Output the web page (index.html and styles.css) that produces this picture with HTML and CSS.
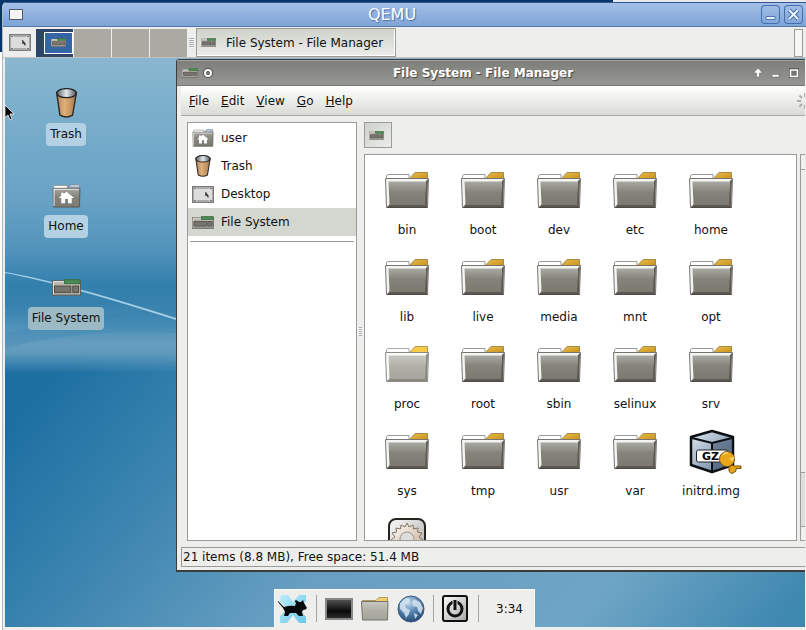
FILE: index.html
```html
<!DOCTYPE html>
<html lang="en">
<head>
<meta charset="utf-8">
<title>QEMU</title>
<link rel="stylesheet" href="styles.css">
</head>
<body>
<svg class="defs" aria-hidden="true">
  <defs>
    <linearGradient id="g-front" x1="0" y1="0" x2="0" y2="1"><stop offset="0" stop-color="#a9a9a3"/><stop offset=".45" stop-color="#85847b"/><stop offset="1" stop-color="#7b7970"/></linearGradient>
    <linearGradient id="g-pale" x1="0" y1="0" x2="0" y2="1"><stop offset="0" stop-color="#c8c8c2"/><stop offset=".5" stop-color="#b0afa5"/><stop offset="1" stop-color="#a6a59b"/></linearGradient>
    <linearGradient id="g-gold" x1="0" y1="0" x2="1" y2="1"><stop offset="0" stop-color="#e9be4e"/><stop offset="1" stop-color="#c8911a"/></linearGradient>
    <linearGradient id="g-wood" x1="0" y1="0" x2="1" y2="0"><stop offset="0" stop-color="#a8845c"/><stop offset=".4" stop-color="#e0b07a"/><stop offset="1" stop-color="#a9794c"/></linearGradient>
    <linearGradient id="g-steel" x1="0" y1="0" x2="1" y2="0"><stop offset="0" stop-color="#555f66"/><stop offset=".5" stop-color="#e4e8ea"/><stop offset="1" stop-color="#4d565c"/></linearGradient>
    <linearGradient id="g-gray" x1="0" y1="0" x2="1" y2="1"><stop offset="0" stop-color="#fafafa"/><stop offset="1" stop-color="#a9a9a9"/></linearGradient>
    <linearGradient id="g-cube" x1="0" y1="0" x2="1" y2="1"><stop offset="0" stop-color="#dfe9f2"/><stop offset="1" stop-color="#5c7796"/></linearGradient>
    <linearGradient id="g-gear" x1="0" y1="0" x2="1" y2="1"><stop offset="0" stop-color="#fff"/><stop offset="1" stop-color="#c9ad94"/></linearGradient>
    <linearGradient id="g-screen" x1="0" y1="0" x2="0" y2="1"><stop offset="0" stop-color="#565656"/><stop offset=".6" stop-color="#0a0a0a"/><stop offset="1" stop-color="#303030"/></linearGradient>
    <radialGradient id="g-globe" cx=".4" cy=".25" r=".8"><stop offset="0" stop-color="#c3d9ec"/><stop offset=".5" stop-color="#5583b0"/><stop offset="1" stop-color="#1f4570"/></radialGradient>
    <linearGradient id="g-x" x1="0" y1="0" x2="1" y2="1"><stop offset="0" stop-color="#b9ecfb"/><stop offset="1" stop-color="#6cc7e6"/></linearGradient>
  </defs>
  <symbol id="folder" viewBox="0 0 46 37">
    <path d="M2.500 8V3.500L4 2.500H25V8z" fill="#fff" stroke="#999"/>
    <path d="M25 7L31 .500H43.500V7z" fill="url(#g-gold)" stroke="#a58a4c"/>
    <path d="M1.500 6.500H44.500L43.500 35.500H2.500z" fill="#f4f4f2" stroke="#77756e"/>
    <path d="M44 7L43 35H3L6 32H40L42 9z" fill="#5c5a52"/>
    <path d="M4.500 9.500H42L41 33H5.500z" fill="url(#g-front)"/>
    <path d="M3 35.500H43.500" stroke="#4c4a44"/>
  </symbol>
  <symbol id="folder-pale" viewBox="0 0 46 37">
    <path d="M2.500 8V3.500L4 2.500H25V8z" fill="#fff" stroke="#aaa"/>
    <path d="M25 7L31 .500H43.500V7z" fill="#f6cb4c" stroke="#b79a52"/>
    <path d="M1.500 6.500H44.500L43.500 35.500H2.500z" fill="#fbfbf9" stroke="#8b8a83"/>
    <path d="M44 7L43 35H3L6 32H40L42 9z" fill="#8a8980"/>
    <path d="M4.500 9.500H42L41 33H5.500z" fill="url(#g-pale)"/>
  </symbol>
  <symbol id="drive" viewBox="0 0 30 17">
    <rect x=".5" y="1.500" width="29" height="15" fill="#b9b7ad" stroke="#5e5d57"/>
    <path d="M1 2.500H13M1.500 3V15" stroke="#eceae2"/>
    <rect x="13" y=".5" width="16" height="4" fill="#4d8d55" stroke="#386a3e"/>
    <rect x="2.500" y="7" width="17" height="6.500" fill="#77756d" stroke="#4b4944"/>
    <rect x="21.500" y="7" width="6" height="6.500" fill="#77756d" stroke="#4b4944"/>
    <path d="M2 15.500H28" stroke="#87857c"/>
  </symbol>
  <symbol id="home" viewBox="0 0 30 25">
    <path d="M1.500 5V2.500L3 1.500H16V5z" fill="#fff" stroke="#999"/>
    <path d="M17 4L20 .500H28.500V4z" fill="#bcc9db" stroke="#8794a6"/>
    <path d="M1 4.500H29L28.500 24H1.500z" fill="url(#g-front)" stroke="#5b5953"/>
    <path d="M1.500 5.500H28M2 5V23" stroke="#eee"/>
    <path d="M15 8L23 14.500H20.500V20H16.500V15.500H13.500V20H9.500V14.500H7L9.500 12V9H12V10.500z" fill="#fff"/>
  </symbol>
  <symbol id="trash" viewBox="0 0 24 32">
    <path d="M1.500 5L5 29Q12 33 18.500 29L22.500 5z" fill="url(#g-wood)" stroke="#302a22" stroke-width="1.500"/>
    <ellipse cx="12" cy="5.500" rx="10.500" ry="4.800" fill="url(#g-steel)" stroke="#222" stroke-width="1.500"/>
  </symbol>
  <symbol id="desk" viewBox="0 0 22 17">
    <rect x=".75" y=".75" width="20.500" height="15.500" fill="#dcdcdc" stroke="#7b7b7b" stroke-width="1.500"/>
    <path d="M2 2.500H4M18 2.500H20M2 14.500H4M18 14.500H20" stroke="#777"/>
    <path d="M5 2.500H17M5 14.500H17" stroke="#aaa"/>
    <path d="M13.500 6V10L14.500 9L16 11.500L16.500 10L15.500 8.500z" fill="#333" stroke="#333" stroke-width=".5"/>
  </symbol>
</svg>

<main class="qemu">
  <header class="qemu-bar">
    <span class="qemu-icon"></span>
    <h1>QEMU</h1>
    <button class="qbtn" type="button" aria-label="Minimize"><svg width="19" height="19"><path d="M5 11.500H14V14.500H5z" fill="#e8f2ff" stroke="#5078b3"/></svg></button>
    <button class="qbtn" type="button" aria-label="Close"><svg width="19" height="19"><path d="M5 5L14 14M14 5L5 14" stroke="#456fac" stroke-width="4"/><path d="M5 5L14 14M14 5L5 14" stroke="#eef5ff" stroke-width="2"/></svg></button>
  </header>

  <nav class="panel" aria-label="Taskbar">
    <button class="show-desk" type="button" aria-label="Show desktop"><svg width="22" height="17"><use href="#desk"/></svg></button>
    <div class="pager">
      <button class="space active" type="button" aria-label="Workspace 1"><span class="mini"><svg width="15" height="9"><use href="#drive"/></svg></span></button>
      <button class="space" type="button" aria-label="Workspace 2"></button>
      <button class="space" type="button" aria-label="Workspace 3"></button>
      <button class="space" type="button" aria-label="Workspace 4"></button>
    </div>
    <span class="grip"></span>
    <button class="task" type="button"><svg width="15" height="9"><use href="#drive"/></svg>File System - File Manager</button>
    <span class="tray"></span>
  </nav>

  <section class="desktop">
    <svg class="beam" viewBox="0 0 800 569" preserveAspectRatio="none" aria-hidden="true">
      <path d="M0 275Q90 255 171 250V275Q80 270 0 290z" fill="#2678a8" opacity=".2"/>
      <path d="M0 214Q55 223 171 260V262Q55 225 0 215z" fill="#b4daee" opacity=".85"/>
    </svg>

    <div class="icons">
      <a class="dicon" href="#trash"><svg width="23" height="30"><use href="#trash"/></svg><span>Trash</span></a>
      <a class="dicon" href="#home"><svg width="29" height="24"><use href="#home"/></svg><span>Home</span></a>
      <a class="dicon" href="#fs"><svg width="29" height="17"><use href="#drive"/></svg><span class="dim">File System</span></a>
    </div>

    <section class="fm">
      <header class="fm-bar">
        <svg width="16" height="10"><use href="#drive"/></svg>
        <button type="button" aria-label="Stick"><svg width="10" height="10"><circle cx="5" cy="5" r="3" fill="none" stroke="#4d4f4a" stroke-width="4"/><circle cx="5" cy="5" r="3" fill="none" stroke="#fff" stroke-width="2"/></svg></button>
        <h2>File System - File Manager</h2>
        <button type="button" aria-label="Shade"><svg width="10" height="10"><path d="M5 0L9.500 5H6.500V9H3.500V5H.500z" fill="#fff" stroke="#5a5c56" stroke-width=".5"/></svg></button>
        <button type="button" aria-label="Minimize"><svg width="10" height="10"><path d="M1 6.500H8V9H1z" fill="#fff" stroke="#5a5c56" stroke-width=".5"/></svg></button>
        <button type="button" aria-label="Maximize"><svg width="10" height="10"><path d="M0 0H10V10H0z" fill="#5a5c56"/><path d="M1.500 2H8.500V8.500H1.500z" fill="#777" stroke="#fff" stroke-width="1.500"/></svg></button>
      </header>
      <nav class="menu" aria-label="Menu">
        <button type="button"><u>F</u>ile</button>
        <button type="button"><u>E</u>dit</button>
        <button type="button"><u>V</u>iew</button>
        <button type="button"><u>G</u>o</button>
        <button type="button"><u>H</u>elp</button>
        <svg class="spin" width="16" height="16"><g stroke="#aaa" stroke-width="2"><path d="M0 8H4M2.500 2.500L5 5M2.500 13.500L5 11M8 0V4M8 12V16M12 8H16M11 5L13.500 2.500M11 11L13.500 13.500"/></g></svg>
      </nav>
      <div class="fm-body">
        <nav class="side" aria-label="Places">
          <a href="#user"><svg width="22" height="18"><use href="#home"/></svg>user</a>
          <a href="#t"><svg width="22" height="22"><use href="#trash"/></svg>Trash</a>
          <a href="#d"><svg width="22" height="17"><use href="#desk"/></svg>Desktop</a>
          <a href="#f" class="sel"><svg width="22" height="13"><use href="#drive"/></svg>File System</a>
          <hr>
        </nav>
        <span class="split"></span>
        <div class="view">
          <button class="path" type="button" aria-label="File System"><svg width="15" height="9"><use href="#drive"/></svg></button>
          <div class="view-row">
            <div class="files">
              <a href="#1"><svg class="fi"><use href="#folder"/></svg>bin</a>
              <a href="#2"><svg class="fi"><use href="#folder"/></svg>boot</a>
              <a href="#3"><svg class="fi"><use href="#folder"/></svg>dev</a>
              <a href="#4"><svg class="fi"><use href="#folder"/></svg>etc</a>
              <a href="#5"><svg class="fi"><use href="#folder"/></svg>home</a>
              <a href="#6"><svg class="fi"><use href="#folder"/></svg>lib</a>
              <a href="#7"><svg class="fi"><use href="#folder"/></svg>live</a>
              <a href="#8"><svg class="fi"><use href="#folder"/></svg>media</a>
              <a href="#9"><svg class="fi"><use href="#folder"/></svg>mnt</a>
              <a href="#10"><svg class="fi"><use href="#folder"/></svg>opt</a>
              <a href="#11"><svg class="fi"><use href="#folder-pale"/></svg>proc</a>
              <a href="#12"><svg class="fi"><use href="#folder"/></svg>root</a>
              <a href="#13"><svg class="fi"><use href="#folder"/></svg>sbin</a>
              <a href="#14"><svg class="fi"><use href="#folder"/></svg>selinux</a>
              <a href="#15"><svg class="fi"><use href="#folder"/></svg>srv</a>
              <a href="#16"><svg class="fi"><use href="#folder"/></svg>sys</a>
              <a href="#17"><svg class="fi"><use href="#folder"/></svg>tmp</a>
              <a href="#18"><svg class="fi"><use href="#folder"/></svg>usr</a>
              <a href="#19"><svg class="fi"><use href="#folder"/></svg>var</a>
              <a href="#20"><svg class="fi" viewBox="0 0 46 37">
                <path d="M3 4L24 -2L45 4V32L24 39L3 32z" fill="url(#g-cube)" stroke="#0c0f13" stroke-width="2.500" stroke-linejoin="round"/>
                <path d="M24 10L44 5V31L24 38z" fill="#45586f" opacity=".6"/>
                <path d="M4 5L24 10L44 5M24 10V38" fill="none" stroke="#0c0f13" stroke-width="2"/>
                <rect x="8.500" y="17" width="31" height="12" rx="2" fill="#fff" stroke="#222"/>
                <text x="14" y="27" class="gz">GZ</text>
                <circle cx="39" cy="26" r="7.500" fill="#e8a81c" stroke="#805708"/>
                <path d="M35 22Q37 19 40 20" fill="none" stroke="#f8dc81" stroke-width="1.500"/>
                <path d="M42 25L44 27L46 24" fill="none" stroke="#f8dc81" stroke-width="1.500"/>
                <path d="M41 34Q44 31 47 33H53V35.500H48V38L44 40.500Q42 40 41 38z" fill="#e4a41b" stroke="#75510a"/>
              </svg>initrd.img</a>
              <a href="#21" aria-label="vmlinuz"><svg class="fi" viewBox="0 0 46 37">
                <rect x="5" y="-1" width="36" height="40" rx="7" fill="url(#g-gray)" stroke="#26241f" stroke-width="2"/>
                <path d="M23 3L25 7L29 5L29.500 9L34 8L33.500 12L38 13L35 17L39 20L35 23V30H11V23L7 20L11 17L8 13L12.500 12L12 8L16.500 9L17 5L21 7z" fill="url(#g-gear)" stroke="#82725f"/>
                <circle cx="23" cy="19" r="7" fill="#ddd" stroke="#a09486"/>
              </svg></a>
            </div>
            <div class="scroll"><span class="arrow"></span><span class="thumb"></span><span class="arrow"></span></div>
          </div>
        </div>
      </div>
      <footer class="status">21 items (8.8 MB), Free space: 51.4 MB</footer>
    </section>

    <nav class="dock" aria-label="Launcher">
      <button type="button" aria-label="Xfce menu"><svg width="30" height="30">
        <path d="M3 1H10L15 8L21 1H28V7L21 15L28 23V29H21L15 21L9 29H2V22L9 15L2 7z" fill="url(#g-x)"/>
        <path d="M0 7L6 13Q12 11 17 12L18 9Q16 7 18 6L21 8L23 8L25 6L26 9L29 14Q28 16 25 16L24 18L25 22H21L18 19H12L10 22H6L7 18L5 14L0 8z" fill="#07090b"/>
      </svg></button>
      <span class="sep"></span>
      <button type="button" aria-label="Terminal"><svg width="28" height="22"><rect x="1" y="1" width="26" height="20" fill="url(#g-screen)" stroke="#888" stroke-width="2"/></svg></button>
      <button type="button" aria-label="Files"><svg width="28" height="24"><path d="M1.500 6V3.500H15L18 .500H26.500V6z" fill="#f1cf6c" stroke="#b09a5c"/><path d="M1 4H15V7H1z" fill="#fff"/><path d="M.500 4.500H27L26.500 23H1.500z" fill="url(#g-pale)" stroke="#77756d"/></svg></button>
      <button type="button" aria-label="Web"><svg width="28" height="28"><circle cx="14" cy="14" r="13" fill="url(#g-globe)" stroke="#3c5c80"/><path d="M3 8L9 3L13 4L12 8L8 10L9 13L13 15L12 19L9 23L7 18L3 14zM17 4L23 7L26 13L24 19L21 16L20 12L16 11L15 7zM17 18L21 20L18 24z" fill="#d5e5f2" opacity=".85"/></svg></button>
      <span class="sep"></span>
      <button type="button" aria-label="Log out"><svg width="26" height="27"><rect x="1" y="1" width="24" height="25" rx="2" fill="url(#g-gray)" stroke="#111" stroke-width="2"/><circle cx="13" cy="14" r="7" fill="none" stroke="#111" stroke-width="3"/><path d="M13 5V14" stroke="#ddd" stroke-width="5"/><path d="M13 5V15" stroke="#111" stroke-width="3"/></svg></button>
      <span class="sep"></span>
      <time>3:34</time>
    </nav>

    <svg class="cursor" width="10" height="16" aria-hidden="true"><path d="M0 0L9 9H5L7 14L5 15L3 10L0 12.500z" fill="#000" stroke="#fff" stroke-width=".75"/></svg>
  </section>
</main>
</body>
</html>
```
FILE: styles.css
```css
* { box-sizing: border-box; }
body {
  margin: 0;
  height: 100vh;
  overflow: hidden;
  display: flex;
  padding: 2px 0 0 2px;
  font: 12px/16px "DejaVu Sans", sans-serif;
  color: #111;
  background:
    linear-gradient(to right, #06356b 613px, #e6e9ee 613px) 0 0 / 100% 3px no-repeat,
    linear-gradient(#06356b 52px, #fff 52px);
}
button {
  font: inherit;
  color: inherit;
  padding: 0;
  border: 0;
  background: none;
}
a { color: inherit; text-decoration: none; }
h1, h2 { margin: 0; font-weight: normal; }
svg { display: block; flex: none; }
.defs { position: absolute; width: 0; height: 0; }

.qemu {
  flex: 1;
  min-width: 0;
  display: flex;
  flex-direction: column;
  border-left: 1px solid #b4b8bd;
  background: #eeeeec;
  border-radius: 5px 0 0 0;
  overflow: hidden;
}
.qemu-bar {
  height: 25px;
  flex: none;
  display: flex;
  align-items: center;
  gap: 4px;
  padding: 0 3px 0 6px;
  border-top: 1px solid #33578c;
  border-bottom: 1px solid #5578ac;
  background: linear-gradient(#a3c0e8, #7ea3d6);
}
.qemu-icon {
  width: 14px;
  height: 11px;
  border: 1px solid #4c5a6b;
  background: #f4f4f2;
}
.qemu-bar h1 {
  flex: 1;
  text-align: center;
  font-size: 16px;
  line-height: 20px;
  color: #fff;
  text-shadow: 1px 1px 1px #4a6fa5;
}
.qbtn {
  width: 19px;
  height: 19px;
  border-radius: 4px;
  box-shadow: inset 0 0 0 1px #456fac;
}

.panel {
  height: 31px;
  flex: none;
  display: flex;
  align-items: center;
  padding: 1px 3px 0 6px;
  border-bottom: 1px solid #c0c0bd;
  background: #eeeeec;
}
.show-desk { margin-right: 5px; }
.pager { display: flex; gap: 1px; height: 28px; }
.space { width: 37px; background: #aaaaa2; }
.space.active {
  display: flex;
  justify-content: flex-end;
  align-items: center;
  background: #2c4568;
}
.mini {
  width: 29px;
  height: 22px;
  display: grid;
  place-items: center;
  border: 1px solid #fff;
  background: #3465a4;
}
.grip {
  width: 5px;
  height: 10px;
  margin: 0 2px;
  background: repeating-linear-gradient(#aaa 0 1px, #fafafa 1px 2px);
}
.task {
  height: 29px;
  display: flex;
  align-items: center;
  gap: 10px;
  padding: 0 12px 0 4px;
  border: 1px solid #9b9b98;
  box-shadow: inset -1px -1px #fff;
  background: linear-gradient(#cfd3cb, #ecece9);
}
.tray {
  width: 9px;
  height: 28px;
  margin-left: auto;
  border: 1px solid #9b9b98;
  background: #f6f6f5;
}

.desktop {
  flex: 1;
  position: relative;
  overflow: hidden;
  margin: 0 1px 3px 2px;
  background:
    linear-gradient(#8ab7d0 0, #7cb0cc 45px, #68a2c5 140px, #5394bc 190px, #3480ad 225px, #3580ad 245px, #4a8fb7 265px, #659dc0 285px, #5f9abd 295px, #2273a500 315px) 0 0 / 100% 315px no-repeat,
    linear-gradient(130deg, #1d6fa2 240px, #3681ad 365px, #689fc2 571px, #6ea5c5 800px, #3f88b0 955px);
}
.beam { position: absolute; width: 100%; height: 100%; }
.icons {
  position: relative;
  width: 122px;
  display: grid;
  grid-auto-rows: 92px;
  justify-items: center;
}
.dicon {
  display: flex;
  flex-direction: column;
  justify-content: flex-end;
  align-items: center;
  height: 88px;
}
.dicon svg { margin: auto 0 5px; }
.dicon span {
  padding: 3px 4px 4px;
  border-radius: 4px;
  background: #b3d1e2;
}
.dicon .dim { background: #9bbac5; }
.dicon:nth-child(2) svg { margin-bottom: 7px; }
.dicon:nth-child(3) svg { margin-bottom: 11px; }

.fm {
  position: absolute;
  left: 171px;
  right: -16px;
  top: 1px;
  bottom: 55px;
  display: flex;
  flex-direction: column;
  border: 1px solid #3b3d3a;
  border-bottom-width: 2px;
  border-radius: 3px 0 0 0;
  background: #eeeeec;
}
.fm-bar {
  height: 26px;
  flex: none;
  display: flex;
  align-items: center;
  gap: 8px;
  padding: 0 21px 0 5px;
  border-top: 1px solid #a3a49f;
  border-bottom: 1px solid #747671;
  background: linear-gradient(#7d7f7a, #969792);
}
.fm-bar > svg + button { margin-left: -3px; }
.fm-bar h2 {
  flex: 1;
  text-align: center;
  font-size: 12px;
  font-weight: bold;
  color: #fff;
  text-shadow: 1px 1px 1px #444;
}
.menu {
  height: 30px;
  flex: none;
  display: flex;
  align-items: center;
  gap: 12px;
  margin-left: 4px;
  padding-left: 8px;
  border-bottom: 1px solid #a8a8a5;
  background: linear-gradient(#fff, #dadad6);
}
.spin { margin-left: auto; margin-right: 7px; }
.fm-body {
  flex: 1;
  min-height: 0;
  display: flex;
  padding: 6px 0 6px 10px;
}
.side {
  width: 170px;
  flex: none;
  border: 1px solid #9b9b98;
  background: #fff;
}
.side a {
  height: 28px;
  display: flex;
  align-items: center;
  gap: 7px;
  padding-left: 4px;
}
.side a:first-child { margin-top: 1px; }
.side .sel { background: #d3d7cf; }
.side hr {
  margin: 5px 2px;
  border: 0;
  border-top: 1px solid #9b9b98;
}
.split {
  width: 3px;
  height: 10px;
  align-self: center;
  margin: 0 2px;
  background: repeating-linear-gradient(#aaa 0 1px, #fafafa 1px 2px);
}
.view {
  flex: 1;
  min-width: 0;
  display: flex;
  flex-direction: column;
  gap: 6px;
}
.path {
  width: 28px;
  height: 26px;
  flex: none;
  padding-left: 4px;
  border: 1px solid #9b9b98;
  background: linear-gradient(135deg, #cdd2ca, #ececea);
}
.view-row {
  flex: 1;
  min-height: 0;
  display: flex;
  gap: 3px;
}
.files {
  flex: 1;
  display: grid;
  grid-template-columns: repeat(auto-fill, 76px);
  grid-auto-rows: 87px;
  align-content: start;
  overflow: hidden;
  padding: 17px 4px 0;
  border: 1px solid #9b9b98;
  background: #fff;
}
.files a {
  display: flex;
  flex-direction: column;
  align-items: center;
  gap: 13px;
}
.fi { width: 46px; height: 37px; overflow: visible; }
.gz { font: bold 11px "DejaVu Sans", sans-serif; }
.scroll {
  width: 20px;
  display: flex;
  flex-direction: column;
  border: 1px solid #9b9b98;
  background: #dededb;
}
.arrow { height: 14px; background: #f1f1ef; }
.thumb {
  height: 304px;
  border: solid #9b9b98;
  border-width: 1px 0;
  background: #eeeeec;
}
.scroll .arrow:last-child { margin-top: auto; border-top: 1px solid #9b9b98; }
.status {
  flex: none;
  margin: 0 0 3px 4px;
  padding: 1px;
  border: 1px solid #9b9b98;
}

.dock {
  position: absolute;
  left: 269px;
  bottom: 0;
  height: 38px;
  display: flex;
  align-items: center;
  gap: 8px;
  padding: 0 11px 0 3px;
  border: 1px solid #f8f8f7;
  border-bottom: 0;
  background: #eeeeec;
}
.sep { width: 1px; height: 27px; background: #a5a5a2; }
.sep + button[aria-label="Log out"] { margin-right: 2px; }
.dock time { padding-left: 9px; }
.cursor { position: absolute; left: 0; top: 47px; }
```
